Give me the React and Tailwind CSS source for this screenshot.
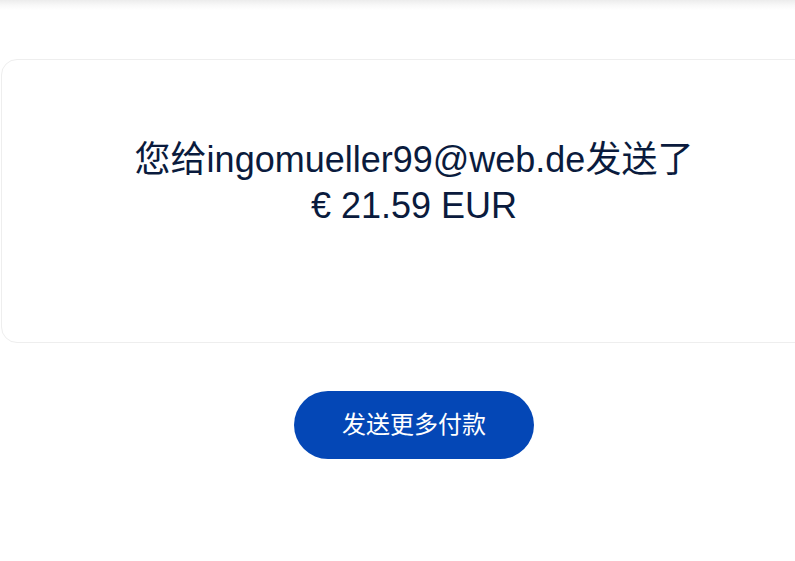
export default function App() {
  return (
    <div
      className="w-[795px] h-[561px] overflow-hidden bg-white"
      style={{ fontFamily: '"Liberation Sans", Arial, "Noto Sans CJK SC", sans-serif' }}
    >
      <div className="h-[10px] w-full bg-gradient-to-b from-[#ececec] via-[#f8f8f8] to-white" />

      <div className="w-[828px] pt-[49px] pl-[1px]">
        <div className="h-[284px] w-[826px] rounded-2xl border border-[#eeeeee] bg-white pt-[77px] text-center">
          <p className="text-[36px] leading-[46px] text-[#0a1b3d]">
            您给ingomueller99@web.de发送了
            <br />
            € 21.59 EUR
          </p>
        </div>

        <div className="mt-[48px] flex w-[826px] justify-center">
          <button className="h-[68px] w-[240px] rounded-full bg-[#0447b6] text-[24px] text-white">
            发送更多付款
          </button>
        </div>
      </div>
    </div>
  )
}
